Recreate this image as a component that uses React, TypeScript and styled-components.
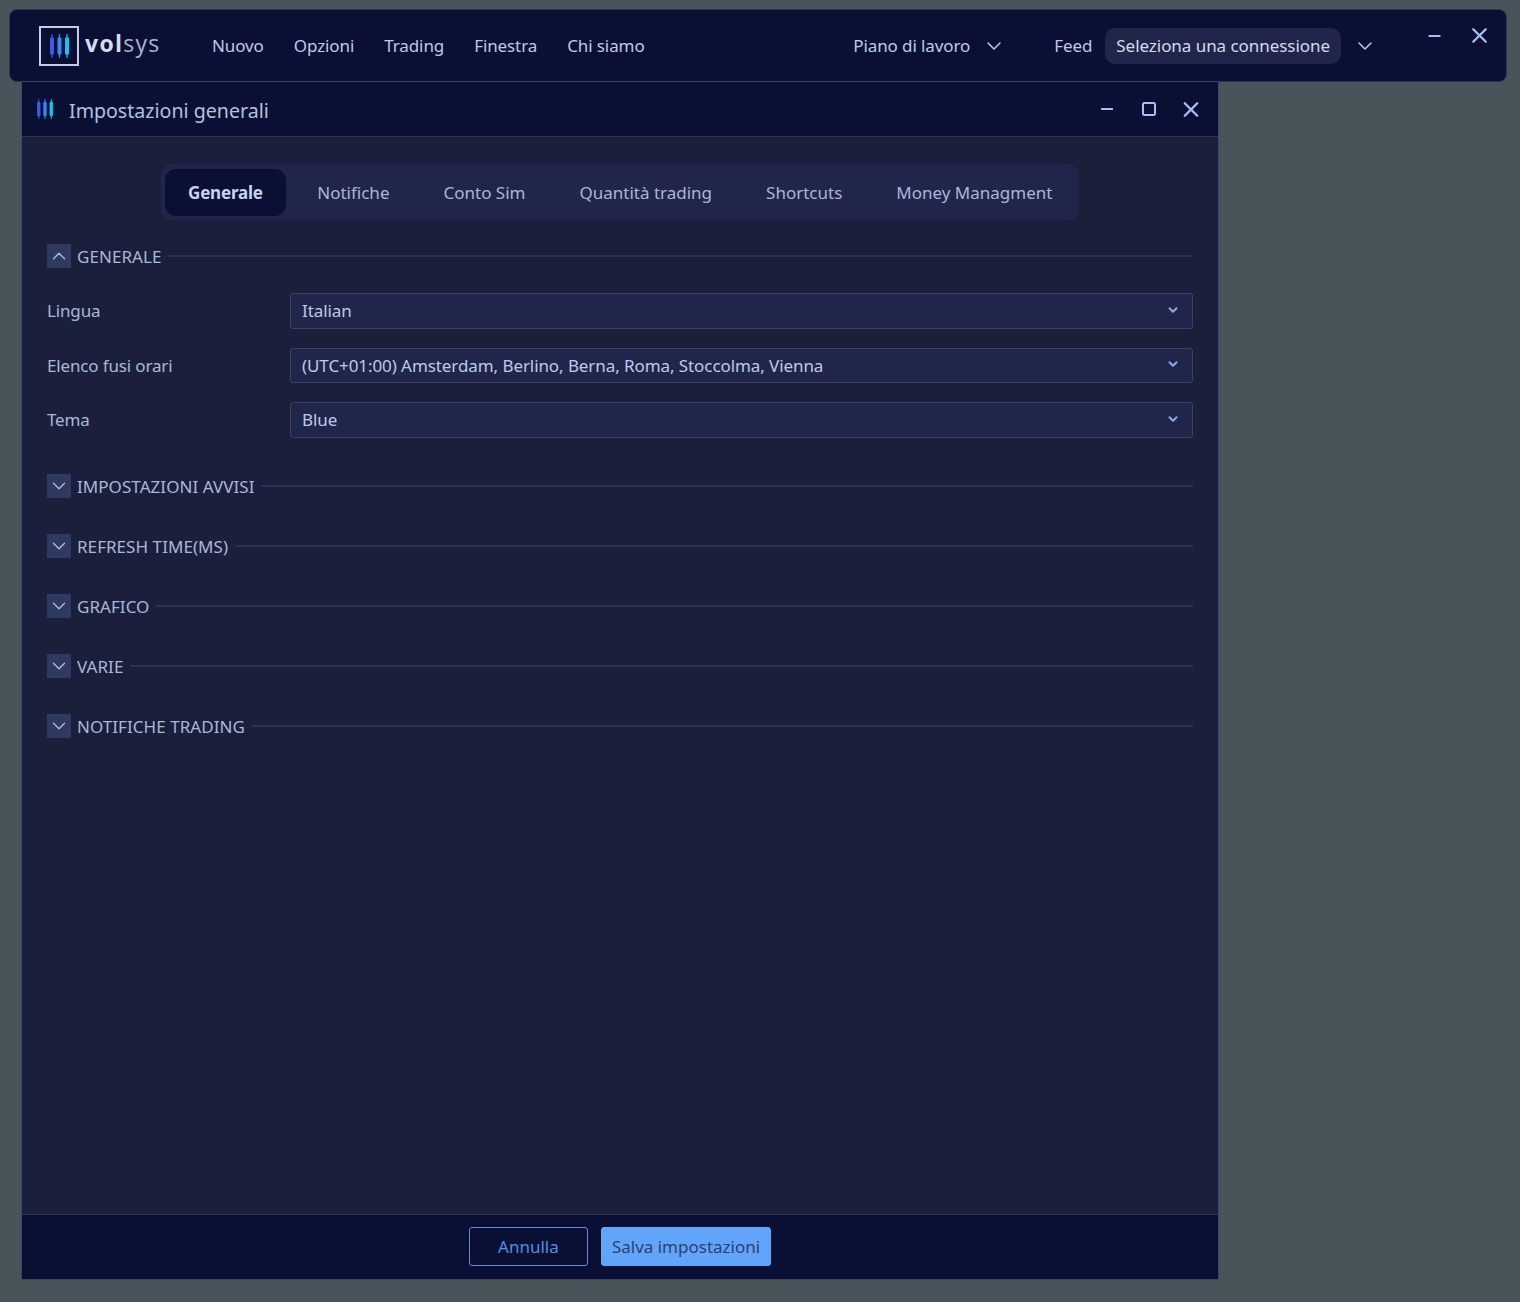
import styled, { createGlobalStyle } from "styled-components";
import { ChevronDown, ChevronUp, Minus, Square, X } from "lucide-react";

const GlobalStyle = createGlobalStyle`
  html, body {
    margin: 0;
    padding: 0;
    background-color: #48545a;
  }
  * {
    box-sizing: border-box;
  }
  body {
    font-family: "Noto Sans", "Open Sans", sans-serif;
    font-size: 17px;
    color: #bccae8;
  }
`;

const Page = styled.div`
  width: 1520px;
  height: 1302px;
  padding: 9px 13px 0 9px;
`;

const TopBar = styled.header`
  height: 73px;
  display: flex;
  align-items: center;
  padding: 0 4px 0 29px;
  background-color: #0a1033;
  border: 1px solid #2c3557;
  border-radius: 8px;
`;

const Brand = styled.div`
  display: flex;
  align-items: center;
  gap: 6px;
  width: 173px;
`;

const LogoBox = styled.div`
  width: 40px;
  height: 40px;
  display: flex;
  align-items: center;
  justify-content: center;
  border: 2px solid #c3cbe6;
`;

const BrandName = styled.span`
  font-family: "Open Sans", sans-serif;
  font-size: 23px;
  letter-spacing: 1.3px;
  line-height: 1;
  margin-top: -4px;
  color: #aab4d0;
  & > b {
    font-weight: 700;
    color: #d5dcef;
  }
`;

const Nav = styled.nav`
  display: flex;
  gap: 30px;
`;

const NavItem = styled.span`
  letter-spacing: -0.1px;
  color: #bccae8;
`;

const TopRight = styled.div`
  margin-left: auto;
  display: flex;
  align-items: center;
`;

const Workspace = styled.div`
  display: flex;
  align-items: center;
  gap: 12px;
  margin-right: 48px;
`;

const Connection = styled.div`
  height: 36px;
  display: flex;
  align-items: center;
  margin: 0 12px 0 13px;
  padding: 0 11px;
  border-radius: 10px;
  letter-spacing: -0.05px;
  background-color: #20264a;
  color: #d3daee;
`;

const WindowControls = styled.div<{ $slot: number }>`
  display: flex;
  align-items: center;
  color: #a9bdf0;
  & > * {
    flex: 0 0 ${(p) => p.$slot}px;
  }
`;

const TopControls = styled(WindowControls)`
  margin: -20px 0 0 35px;
`;

const SettingsWindow = styled.section`
  width: 1198px;
  height: 1199px;
  margin: -1px 0 0 12px;
  display: flex;
  flex-direction: column;
  background-color: #1a203c;
  border: 1px solid #3a4365;
`;

const WindowHeader = styled.div`
  height: 55px;
  flex-shrink: 0;
  display: flex;
  align-items: center;
  padding: 0 6px 0 14px;
  background-color: #0a1033;
  border-bottom: 1px solid #2c3557;
`;

const WindowTitle = styled.h1`
  margin: 3px 0 0 15px;
  font-size: 19.6px;
  font-weight: 400;
  color: #b4c0de;
`;

const HeaderControls = styled(WindowControls)`
  margin-left: auto;
`;

const Content = styled.div`
  flex: 1;
  padding: 27px 25px 0;
`;

const TabsRow = styled.div`
  display: flex;
  justify-content: center;
`;

const Tabs = styled.div`
  height: 56px;
  display: flex;
  align-items: center;
  padding: 0 0 0 4px;
  border-radius: 12px;
  background-color: #20264a;
`;

const Tab = styled.div<{ $active?: boolean }>`
  height: 47px;
  display: flex;
  align-items: center;
  padding: 0 ${(p) => (p.$active ? "23.5px" : "27px")};
  margin-right: ${(p) => (p.$active ? "4px" : "0")};
  border-radius: 11px;
  font-weight: ${(p) => (p.$active ? 700 : 400)};
  letter-spacing: ${(p) => (p.$active ? "-0.2px" : "0")};
  color: ${(p) => (p.$active ? "#c5d2f0" : "#a9b6d6")};
  background-color: ${(p) => (p.$active ? "#0a1033" : "transparent")};
`;

const ClosedSections = styled.div`
  margin-top: 18.5px;
`;

const Section = styled.div`
  height: 60px;
  padding-top: 18px;
`;

const OpenSection = styled.div`
  margin-top: 24px;
`;

const SectionHeader = styled.div`
  height: 24px;
  display: flex;
  align-items: center;
`;

const Toggle = styled.div`
  width: 24px;
  height: 24px;
  flex-shrink: 0;
  display: flex;
  align-items: center;
  justify-content: center;
  background-color: #2f3a60;
  color: #aebbdc;
`;

const SectionTitle = styled.span`
  margin: 0 7px 0 6px;
  letter-spacing: 0.05px;
  color: #a9b8d8;
`;

const SectionLine = styled.div`
  flex: 1;
  height: 2px;
  background-color: #2a3152;
`;

const Fields = styled.div`
  display: flex;
  flex-direction: column;
  gap: 19px;
  margin-top: 25px;
`;

const Field = styled.div`
  display: flex;
  align-items: center;
`;

const FieldLabel = styled.label`
  width: 243px;
  flex-shrink: 0;
  letter-spacing: -0.15px;
  color: #a9b8d8;
`;

const SelectBox = styled.div`
  flex: 1;
  height: 35.5px;
  display: flex;
  align-items: center;
  justify-content: space-between;
  padding: 0 12px 0 11px;
  background-color: #20264a;
  border: 1px solid #3a4266;
  border-radius: 3px;
  letter-spacing: -0.08px;
  color: #bccae8;
  & > svg {
    margin-top: -2px;
  }
`;

const Footer = styled.footer`
  height: 65px;
  flex-shrink: 0;
  display: flex;
  align-items: center;
  justify-content: center;
  gap: 13px;
  padding-bottom: 2px;
  background-color: #0a1033;
  border-top: 1px solid #2c3557;
`;

const Button = styled.button<{ $primary?: boolean }>`
  height: 39px;
  padding: 0 10px;
  min-width: 119px;
  font: inherit;
  border-radius: 3px;
  border: 1px solid ${(p) => (p.$primary ? "#60a5fa" : "#5c8fd8")};
  background-color: ${(p) => (p.$primary ? "#60a5fa" : "transparent")};
  color: ${(p) => (p.$primary ? "#2c3f70" : "#4f8fe8")};
`;

// three candlesticks: a thin wick with a wider body on it
const Logo = ({ width, height }: { width: number; height: number }) => (
  <svg width={width} height={height} viewBox="0 0 21 24" fill="none">
    {[
      { x: 3, color: "#3b5be8" },
      { x: 10.5, color: "#2f8cf0" },
      { x: 18, color: "#14c4f5" },
    ].map((bar) => (
      <g key={bar.x} stroke={bar.color} strokeLinecap="round">
        <path d={`M${bar.x} 0.5v23`} strokeWidth="1.2" />
        <path d={`M${bar.x} 5v14`} strokeWidth="4" />
      </g>
    ))}
  </svg>
);

const fields = [
  { label: "Lingua", value: "Italian" },
  {
    label: "Elenco fusi orari",
    value: "(UTC+01:00) Amsterdam, Berlino, Berna, Roma, Stoccolma, Vienna",
  },
  { label: "Tema", value: "Blue" },
];

const navItems = ["Nuovo", "Opzioni", "Trading", "Finestra", "Chi siamo"];
const tabs = [
  "Generale",
  "Notifiche",
  "Conto Sim",
  "Quantità trading",
  "Shortcuts",
  "Money Managment",
];
const closedSections = [
  "IMPOSTAZIONI AVVISI",
  "REFRESH TIME(MS)",
  "GRAFICO",
  "VARIE",
  "NOTIFICHE TRADING",
];

const App = () => {
  return (
    <Page>
      <GlobalStyle />
      <TopBar>
        <Brand>
          <LogoBox>
            <Logo width={21} height={24} />
          </LogoBox>
          <BrandName>
            <b>vol</b>sys
          </BrandName>
        </Brand>
        <Nav>
          {navItems.map((item) => (
            <NavItem key={item}>{item}</NavItem>
          ))}
        </Nav>
        <TopRight>
          <Workspace>
            <NavItem>Piano di lavoro</NavItem>
            <ChevronDown size={24} strokeWidth={1.5} />
          </Workspace>
          <NavItem>Feed</NavItem>
          <Connection>Seleziona una connessione</Connection>
          <ChevronDown size={24} strokeWidth={1.5} />
          <TopControls $slot={45}>
            <Minus size={18} strokeWidth={2.4} />
            <X size={25} strokeWidth={2.2} />
          </TopControls>
        </TopRight>
      </TopBar>

      <SettingsWindow>
        <WindowHeader>
          <Logo width={18} height={20} />
          <WindowTitle>Impostazioni generali</WindowTitle>
          <HeaderControls $slot={42}>
            <Minus size={18} strokeWidth={2.4} />
            <Square size={16} strokeWidth={3} />
            <X size={25} strokeWidth={2.2} />
          </HeaderControls>
        </WindowHeader>

        <Content>
          <TabsRow>
            <Tabs>
              {tabs.map((tab, i) => (
                <Tab key={tab} $active={i === 0}>
                  {tab}
                </Tab>
              ))}
            </Tabs>
          </TabsRow>

          <OpenSection>
            <SectionHeader>
              <Toggle>
                <ChevronUp size={22} strokeWidth={1.5} />
              </Toggle>
              <SectionTitle>GENERALE</SectionTitle>
              <SectionLine />
            </SectionHeader>
            <Fields>
              {fields.map((field) => (
                <Field key={field.label}>
                  <FieldLabel>{field.label}</FieldLabel>
                  <SelectBox>
                    {field.value}
                    <ChevronDown size={14} strokeWidth={3.5} color="#8ea6e6" />
                  </SelectBox>
                </Field>
              ))}
            </Fields>
          </OpenSection>

          <ClosedSections>
            {closedSections.map((title) => (
              <Section key={title}>
                <SectionHeader>
                  <Toggle>
                    <ChevronDown size={22} strokeWidth={1.5} />
                  </Toggle>
                  <SectionTitle>{title}</SectionTitle>
                  <SectionLine />
                </SectionHeader>
              </Section>
            ))}
          </ClosedSections>
        </Content>

        <Footer>
          <Button>Annulla</Button>
          <Button $primary>Salva impostazioni</Button>
        </Footer>
      </SettingsWindow>
    </Page>
  );
};

export default App;
